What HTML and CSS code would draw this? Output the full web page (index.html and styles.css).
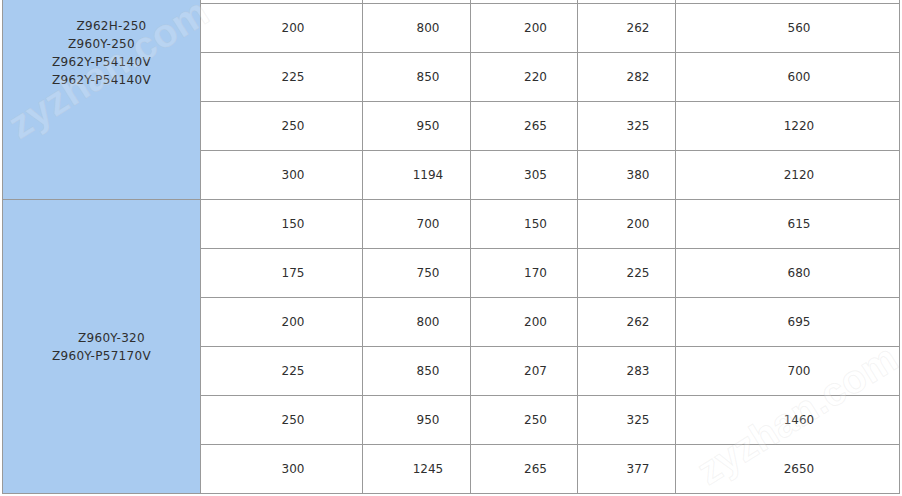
FILE: index.html
```html
<!DOCTYPE html>
<html lang="zh">
<head>
<meta charset="utf-8">
<title>闸阀尺寸表</title>
<link rel="stylesheet" href="styles.css">
</head>
<body>
<div class="viewport">
  <table class="spec">
    <colgroup>
      <col class="c-model"><col class="c-dn"><col class="c-l"><col class="c-d"><col class="c-d1"><col class="c-w">
    </colgroup>
    <tbody>
      <tr class="hidden-row">
        <td class="model" rowspan="6">
          <span class="line lead">Z962H-250</span>
          <span class="line">Z960Y-250</span>
          <span class="line">Z962Y-P54140V</span>
          <span class="line">Z962Y-P54140V</span>
        </td>
        <td></td><td></td><td></td><td></td><td></td>
      </tr>
      <tr class="hidden-row"><td></td><td></td><td></td><td></td><td></td></tr>
      <tr><td>200</td><td>800</td><td>200</td><td>262</td><td>560</td></tr>
      <tr><td>225</td><td>850</td><td>220</td><td>282</td><td>600</td></tr>
      <tr><td>250</td><td>950</td><td>265</td><td>325</td><td>1220</td></tr>
      <tr><td>300</td><td>1194</td><td>305</td><td>380</td><td>2120</td></tr>
      <tr>
        <td class="model" rowspan="6">
          <span class="line lead">Z960Y-320</span>
          <span class="line">Z960Y-P57170V</span>
        </td>
        <td>150</td><td>700</td><td>150</td><td>200</td><td>615</td>
      </tr>
      <tr><td>175</td><td>750</td><td>170</td><td>225</td><td>680</td></tr>
      <tr><td>200</td><td>800</td><td>200</td><td>262</td><td>695</td></tr>
      <tr><td>225</td><td>850</td><td>207</td><td>283</td><td>700</td></tr>
      <tr><td>250</td><td>950</td><td>250</td><td>325</td><td>1460</td></tr>
      <tr><td>300</td><td>1245</td><td>265</td><td>377</td><td>2650</td></tr>
    </tbody>
  </table>
  <span class="watermark wm-1" aria-hidden="true">zyzhan.com</span>
  <span class="watermark wm-2" aria-hidden="true">zyzhan.com</span>
</div>
</body>
</html>
```
FILE: styles.css
```css
html, body {
  margin: 0;
  padding: 0;
  background: #ffffff;
}

.viewport {
  position: relative;
  height: 496px;
  overflow: hidden;
  padding-left: 2px;
}

.spec {
  border-collapse: separate;
  border-spacing: 0;
  table-layout: fixed;
  width: 898px;
  margin-top: -95px;
  border-top: 1px solid #999999;
  border-left: 1px solid #999999;
  font-family: "DejaVu Sans", Verdana, sans-serif;
  font-size: 12px;
  line-height: 18px;
  color: #2f2f2f;
}

.c-model { width: 198px; }
.c-dn { width: 162px; }
.c-l { width: 108px; }
.c-d { width: 107px; }
.c-d1 { width: 98px; }
.c-w { width: 224px; }

.spec td {
  box-sizing: border-box;
  height: 49px;
  padding: 0 0 0 23px;
  border-right: 1px solid #999999;
  border-bottom: 1px solid #999999;
  text-align: center;
  vertical-align: middle;
  white-space: nowrap;
}

.spec td.model {
  background: #a9cbf0;
  padding: 0;
}

.line {
  display: block;
  letter-spacing: 0.3px;
}

.line.lead {
  padding-left: 20px;
}

.watermark {
  position: absolute;
  width: 230px;
  height: 46px;
  line-height: 46px;
  text-align: center;
  font-family: "Liberation Sans", Arial, sans-serif;
  font-weight: bold;
  font-size: 40px;
  color: rgba(255, 255, 255, 0.2);
  -webkit-text-stroke: 1px rgba(190, 190, 190, 0.16);
  transform: rotate(-32deg);
  pointer-events: none;
}

.wm-1 {
  left: -7px;
  top: 45px;
}

.wm-2 {
  left: 682px;
  top: 391px;
}
```
